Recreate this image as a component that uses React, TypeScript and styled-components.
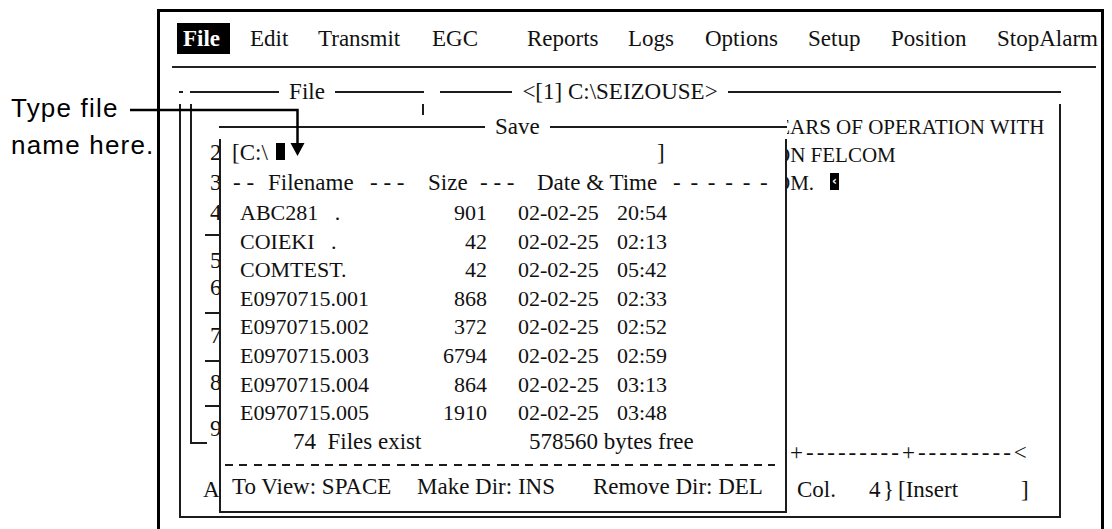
import styled, { createGlobalStyle, css } from 'styled-components'

const serif = `"Liberation Serif", "Times New Roman", serif`
const ink = '#1c1c1c'

const GlobalStyle = createGlobalStyle`
  html, body {
    margin: 0;
    padding: 0;
    background: #fff;
  }
  body {
    font-family: ${serif};
    color: #111;
  }
`

const Page = styled.div`
  position: relative;
  display: flex;
  width: 1112px;
  height: 529px;
  overflow: hidden;
  background: #fff;
`

const Callout = styled.div`
  flex: none;
  box-sizing: border-box;
  width: 157px;
  padding: 90px 0 0 11px;
  font-family: "Liberation Sans", Arial, sans-serif;
  font-size: 26px;
  line-height: 37px;
  letter-spacing: 1.2px;
  color: #000;
  white-space: nowrap;
`

const Leader = styled.svg`
  position: absolute;
  left: 0;
  top: 0;
  z-index: 5;
  pointer-events: none;
`

const Frame = styled.div`
  flex: none;
  box-sizing: border-box;
  width: 947px;
  height: 540px;
  margin-top: 9px;
  border: 3px solid #000;
  display: flex;
  flex-direction: column;
`

const MenuBar = styled.nav`
  display: grid;
  grid-template-columns: 67px 68px 114px 95px 101px 77px 103px 83px 106px auto;
  margin: 11px 0 0 17px;
  font-size: 23px;
  line-height: 31px;
`

const MenuItem = styled.span<{ $active?: boolean }>`
  justify-self: start;
  padding-left: 6px;
  white-space: nowrap;
  ${(p) =>
    p.$active &&
    css`
      padding-right: 10px;
      background: #000;
      color: #fff;
      font-weight: bold;
    `}
`

const MenuRule = styled.div`
  height: 2px;
  margin: 12px 5px 0 12px;
  background: #222;
`

const Window = styled.div`
  position: relative;
  box-sizing: border-box;
  width: 882px;
  height: 426px;
  margin: 24px 0 0 19px;
  padding-bottom: 12px;
  border: 2px solid ${ink};
  border-top: 0;
  display: flex;
  flex-direction: column;
  background: #fff;
`

// title sitting on the top border line, like a text-mode frame
const TitleRow = styled.div<{ $lead?: number }>`
  display: flex;
  align-items: center;
  height: 24px;
  margin: -12px -2px 0;
  background: #fff;
  font-size: 23px;
  line-height: 24px;
  &::before,
  &::after {
    content: '';
    flex: 1;
    height: 2px;
    background: ${ink};
  }
  ${(p) =>
    p.$lead != null &&
    css`
      &::before {
        flex: 0 0 ${p.$lead}px;
      }
    `}
`

const TitleText = styled.span`
  padding: 0 10px;
  white-space: pre;
`

const TextLines = styled.div`
  margin-top: 9px;
  font-size: 21px;
  line-height: 28px;
`

const TextLine = styled.div<{ $indent: number }>`
  padding-left: ${(p) => p.$indent}px;
  white-space: pre;
`

const Cursor = styled.span<{ $gap?: number }>`
  display: inline-block;
  width: 9px;
  height: 17px;
  margin-left: ${(p) => p.$gap ?? 0}px;
  background: #000;
  color: #fff;
  font-family: "DejaVu Sans", sans-serif;
  font-size: 12px;
  font-weight: bold;
  line-height: 17px;
  text-align: center;
  overflow: hidden;
`

const Ruler = styled.div`
  margin-top: auto;
  padding-left: 609px;
  font-size: 23px;
  line-height: 28px;
  letter-spacing: 3px;
  white-space: pre;
`

const StatusBar = styled.div`
  display: grid;
  grid-template-columns: 594px 72px 14px 15px 123px auto;
  margin-top: 9px;
  padding-left: 22px;
  font-size: 23px;
  line-height: 28px;
  white-space: pre;
`

const FileMenu = styled.div`
  position: absolute;
  left: 2px;
  top: -12px;
  padding: 12px 16px 0 7px;
  background: #fff;
`

const FileBox = styled.div`
  position: relative;
  box-sizing: border-box;
  width: 234px;
  height: 364px;
  border: 2px solid ${ink};
  border-top: 0;
  border-bottom: 0;
  &::after {
    content: '';
    position: absolute;
    left: -2px;
    bottom: 0;
    width: 17px;
    height: 2px;
    background: ${ink};
  }
`

const FileItems = styled.div`
  padding: 38px 0 0 18px;
  font-size: 23px;
`

const FileItem = styled.div<{ $h: number }>`
  height: ${(p) => p.$h}px;
  line-height: 22px;
`

const FileSep = styled.div<{ $h: number }>`
  box-sizing: border-box;
  height: ${(p) => p.$h}px;
  padding: 10px 0 0 0;
  &::before {
    content: '';
    display: block;
    height: 2px;
    margin-left: -5px;
    background: ${ink};
  }
`

const SaveDialog = styled.div`
  position: absolute;
  left: 38px;
  top: 35px;
  box-sizing: border-box;
  width: 568px;
  padding-bottom: 3px;
  border: 2px solid ${ink};
  border-top: 0;
  background: #fff;
  font-size: 23px;
`

const PathRow = styled.div`
  display: grid;
  grid-template-columns: 44px 381px auto;
  align-items: baseline;
  padding-left: 11px;
  line-height: 28px;
  white-space: pre;
`

const HeaderRow = styled.div`
  display: grid;
  grid-template-columns: 35px 102px 58px 52px 57px 136px auto;
  padding-left: 12px;
  line-height: 32px;
  white-space: pre;
`

const DashRun = styled.span<{ $spread?: number }>`
  letter-spacing: ${(p) => p.$spread ?? 0}px;
`

const FileRow = styled.div`
  display: grid;
  grid-template-columns: 160px 87px 130px auto;
  padding-left: 19px;
  font-size: 22px;
  line-height: 28.6px;
  white-space: pre;
`

const Cell = styled.span<{ $right?: boolean; $pad?: number }>`
  text-align: ${(p) => (p.$right ? 'right' : 'left')};
  padding-left: ${(p) => p.$pad ?? 0}px;
`

const SummaryRow = styled.div`
  display: grid;
  grid-template-columns: 236px auto;
  padding-left: 72px;
  line-height: 28.6px;
  white-space: pre;
`

const DashRule = styled.div`
  height: 2px;
  margin: 8px 10px 0 4px;
  background: repeating-linear-gradient(to right, ${ink} 0 8px, transparent 8px 14.3px);
`

const FooterRow = styled.div`
  display: grid;
  grid-template-columns: 185px 176px auto;
  padding-left: 11px;
  line-height: 42px;
  white-space: pre;
`

const menu = ['File', 'Edit', 'Transmit', 'EGC', 'Reports', 'Logs', 'Options', 'Setup', 'Position', 'StopAlarm']

const fileMenuRows: { t?: string; h: number }[] = [
  { t: '2', h: 30 },
  { t: '3', h: 30 },
  { t: '4', h: 22 },
  { h: 26 },
  { t: '5', h: 27 },
  { t: '6', h: 25 },
  { h: 23 },
  { t: '7', h: 25 },
  { h: 22 },
  { t: '8', h: 23 },
  { h: 23 },
  { t: '9', h: 26 },
]

const files = [
  { name: 'ABC281   .', size: '901', date: '02-02-25', time: '20:54' },
  { name: 'COIEKI   .', size: '42', date: '02-02-25', time: '02:13' },
  { name: 'COMTEST.', size: '42', date: '02-02-25', time: '05:42' },
  { name: 'E0970715.001', size: '868', date: '02-02-25', time: '02:33' },
  { name: 'E0970715.002', size: '372', date: '02-02-25', time: '02:52' },
  { name: 'E0970715.003', size: '6794', date: '02-02-25', time: '02:59' },
  { name: 'E0970715.004', size: '864', date: '02-02-25', time: '03:13' },
  { name: 'E0970715.005', size: '1910', date: '02-02-25', time: '03:48' },
]

const App = () => {
  return (
    <Page>
      <GlobalStyle />
      <Callout>
        Type file
        <br />
        name here.
      </Callout>

      <Frame>
        <MenuBar>
          {menu.map((m, i) => (
            <MenuItem key={m} $active={i === 0}>
              {m}
            </MenuItem>
          ))}
        </MenuBar>
        <MenuRule />

        <Window>
          <TitleRow>
            <TitleText>{'<[1] C:\\SEIZOUSE>'}</TitleText>
          </TitleRow>
          <TextLines>
            <TextLine $indent={581}>YEARS OF OPERATION WITH</TextLine>
            <TextLine $indent={594}>ON FELCOM</TextLine>
            <TextLine $indent={594}>
              OM.
              <Cursor $gap={16}>‹</Cursor>
            </TextLine>
          </TextLines>
          <Ruler>+---------+---------&lt;</Ruler>
          <StatusBar>
            <span>{'A:\\'}</span>
            <span>Col.</span>
            <span>4</span>
            <span>{'}'}</span>
            <span>[Insert</span>
            <span>]</span>
          </StatusBar>

          <FileMenu>
            <FileBox>
              <TitleRow>
                <TitleText>File</TitleText>
              </TitleRow>
              <FileItems>
                {fileMenuRows.map((r, i) =>
                  r.t ? (
                    <FileItem key={i} $h={r.h}>
                      {r.t}
                    </FileItem>
                  ) : (
                    <FileSep key={i} $h={r.h} />
                  ),
                )}
              </FileItems>
            </FileBox>
          </FileMenu>

          <SaveDialog>
            <TitleRow $lead={266}>
              <TitleText>Save</TitleText>
            </TitleRow>
            <PathRow>
              <span>{'[C:\\'}</span>
              <span>
                <Cursor />
              </span>
              <span>]</span>
            </PathRow>
            <HeaderRow>
              <DashRun>- -</DashRun>
              <span>Filename</span>
              <DashRun>- - -</DashRun>
              <span>Size</span>
              <DashRun>- - -</DashRun>
              <span>Date &amp; Time</span>
              <DashRun $spread={2}>- - - - - -</DashRun>
            </HeaderRow>
            {files.map((f) => (
              <FileRow key={f.name}>
                <Cell>{f.name}</Cell>
                <Cell $right>{f.size}</Cell>
                <Cell $pad={31}>{f.date}</Cell>
                <Cell>{f.time}</Cell>
              </FileRow>
            ))}
            <SummaryRow>
              <span>74  Files exist</span>
              <span>578560 bytes free</span>
            </SummaryRow>
            <DashRule />
            <FooterRow>
              <span>To View: SPACE</span>
              <span>Make Dir: INS</span>
              <span>Remove Dir: DEL</span>
            </FooterRow>
          </SaveDialog>
        </Window>
      </Frame>

      <Leader width="1112" height="529" viewBox="0 0 1112 529">
        <path d="M130 110 H297.5 V146" fill="none" stroke="#000" strokeWidth="2.5" />
        <polygon points="290.5,143 304.5,143 297.5,156" fill="#000" />
      </Leader>
    </Page>
  )
}

export default App
